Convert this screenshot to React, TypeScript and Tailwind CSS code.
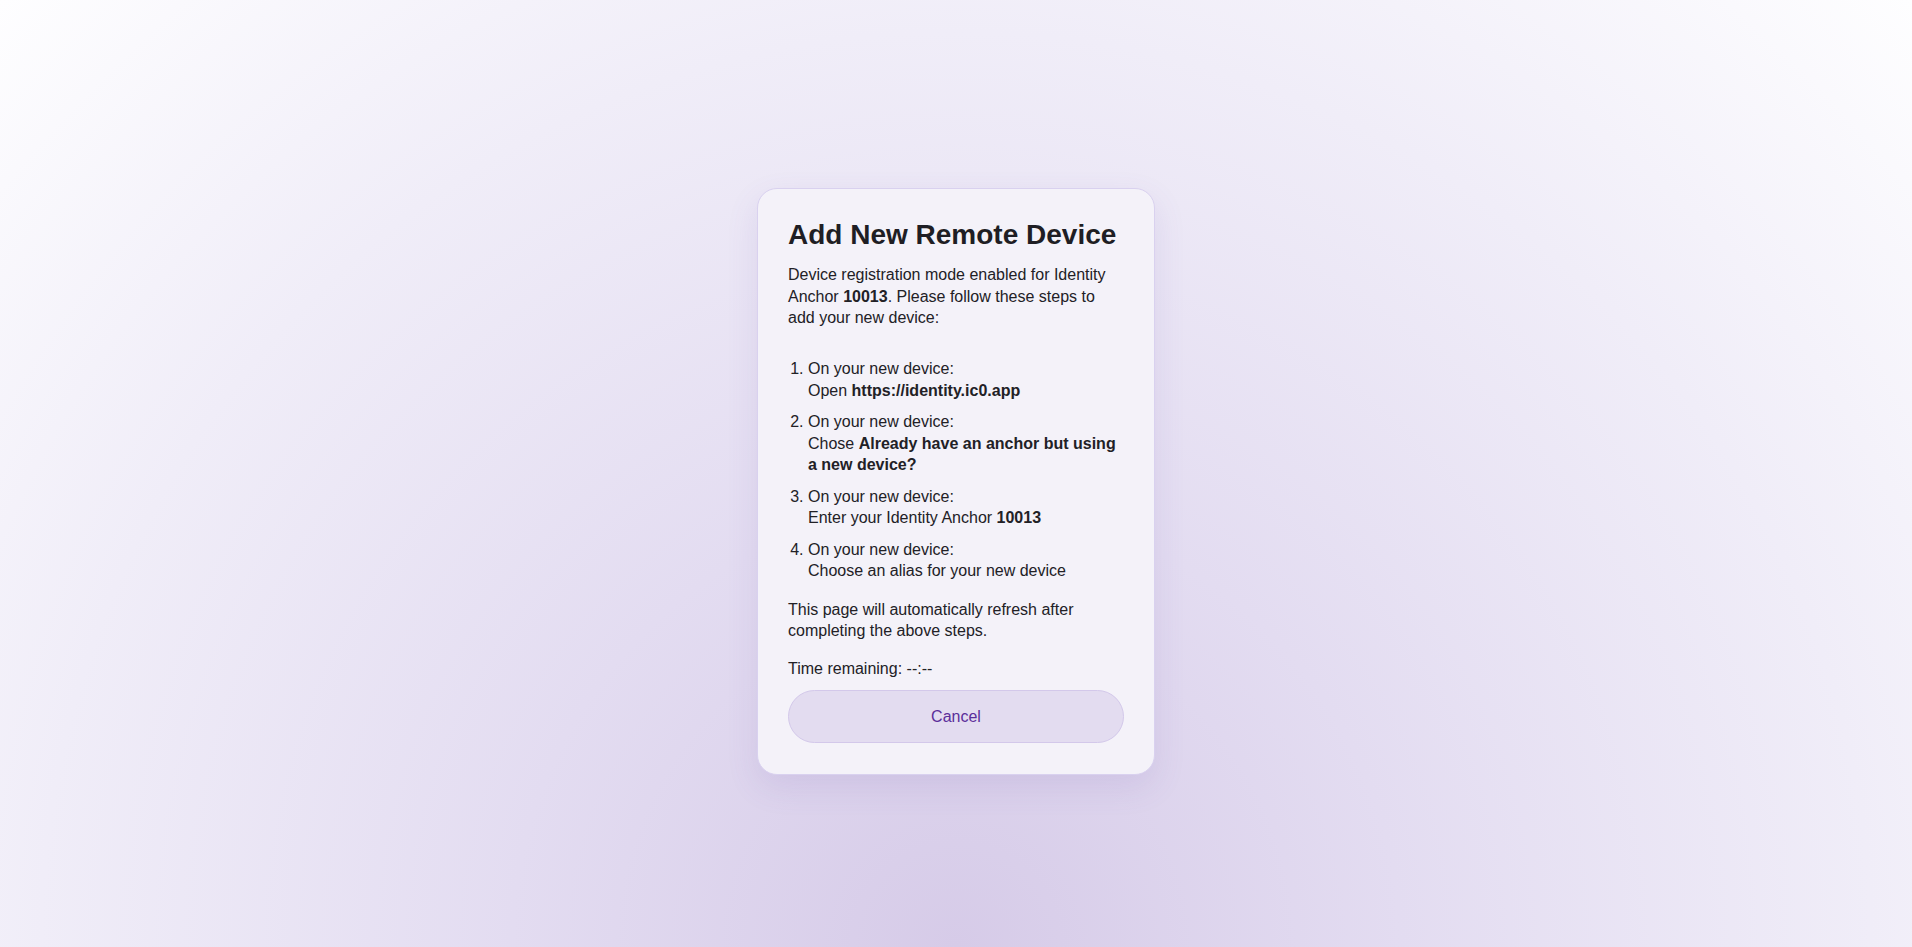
export default function App() {
  return (
    <div
      className="min-h-screen w-full flex items-center justify-center pt-[16px] bg-[radial-gradient(circle_farthest-corner_at_50%_100%,#d6cbe8_0%,#e3dcf1_33%,#f0edf8_68%,#fefeff_100%)] text-[#222126]"
      style={{ fontFamily: '"Liberation Sans", Arial, sans-serif' }}
    >
      <div className="w-[398px] rounded-[20px] border border-[#d9d1ef] bg-[#f4f2f9] px-[30px] pt-[29px] pb-[31px] shadow-[0_12px_32px_rgba(110,80,170,0.12)]">
        <h1 className="text-[28px] leading-[33.6px] font-bold text-[#1f1e24]">Add New Remote Device</h1>
        <p className="mt-[12.7px] text-[16px] leading-[21.33px]">
          Device registration mode enabled for Identity Anchor <b>10013</b>. Please follow these steps to add
          your new device:
        </p>
        <ol className="mt-[30px] list-decimal pl-5 text-[16px] leading-[21.33px] flex flex-col gap-[10.4px]">
          <li>
            On your new device:
            <br />
            Open <b>https://identity.ic0.app</b>
          </li>
          <li>
            On your new device:
            <br />
            Chose <b>Already have an anchor but using a new device?</b>
          </li>
          <li>
            On your new device:
            <br />
            Enter your Identity Anchor <b>10013</b>
          </li>
          <li>
            On your new device:
            <br />
            Choose an alias for your new device
          </li>
        </ol>
        <p className="mt-[17.3px] text-[16px] leading-[21.33px]">
          This page will automatically refresh after completing the above steps.
        </p>
        <p className="mt-[17px] text-[16px] leading-[21.33px]">Time remaining: --:--</p>
        <button className="mt-[10.5px] h-[53px] w-full rounded-full border border-[#d3c8ea] bg-[#e3dcf0] text-[16px] text-[#5b2e9a]">
          Cancel
        </button>
      </div>
    </div>
  );
}
